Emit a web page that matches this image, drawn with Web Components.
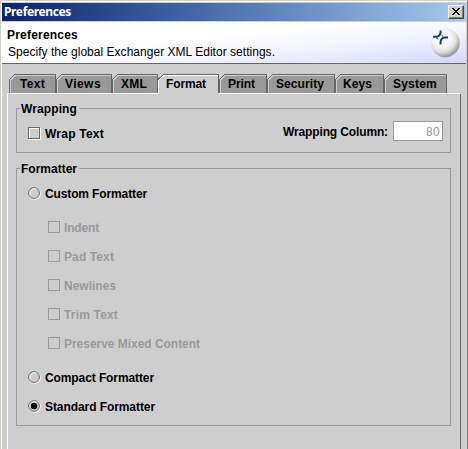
<!DOCTYPE html>
<html lang="en">
<head>
<meta charset="utf-8">
<title>Preferences</title>
<style>
html,body{margin:0;width:468px;height:449px;overflow:hidden;background:#cecece}
body{font:bold 12px/14px "Liberation Sans",Arial,sans-serif;color:#000}
</style>
</head>
<body>
<pref-window></pref-window>
<script>
const define=(name,html,setup)=>customElements.define(name,class extends HTMLElement{
  connectedCallback(){
    if(this.shadowRoot)return;
    const t=document.createElement('template');
    t.innerHTML=html;
    this.attachShadow({mode:'open'}).append(t.content.cloneNode(true));
    if(setup)setup(this,this.shadowRoot);
  }
});

/* One line of text, tracked to fill the width given by "w". */
define('ui-text',`<style>
:host{display:block;flex:none;white-space:nowrap;height:14px}
span{display:inline-block;vertical-align:top;line-height:var(--text-line,14px)}
</style><span><slot></slot></span>`,(el,root)=>{
  const w=+el.getAttribute('w'),s=root.querySelector('span');
  el.style.width=w+'px';
  s.style.letterSpacing=((w-s.getBoundingClientRect().width)/el.textContent.length)+'px';
});

define('title-bar',`<style>
:host{display:flex;height:18px;box-sizing:border-box;padding:0 2px;align-items:center;justify-content:space-between;color:#fff;
 background:linear-gradient(90deg,#0a246a 0%,#2c4c90 25%,#4f76b4 50%,#7c9fd2 75%,#a6caf0 100%);
 font:bold 12px/14px "Noto Sans","Open Sans",sans-serif}
button{all:unset;box-sizing:border-box;width:16px;height:14px;background:#d4d0c8;border:1px solid;border-color:#fff #404040 #404040 #fff;box-shadow:inset -1px -1px #808080;display:grid;place-items:center}
svg{display:block;margin:-1px 1px 0 0}
</style><slot></slot><button aria-label="Close"><svg width="8" height="7" shape-rendering="crispEdges"><path d="M0 0h2v1h1v1h2v-1h1v-1h2v1h-1v1h-1v1h-1v1h1v1h1v1h1v1h-2v-1h-1v-1h-2v1h-1v1h-2v-1h1v-1h1v-1h1v-1h-1v-1h-1v-1h-1z"/></svg></button>`);

define('header-banner',`<style>
:host{display:flex;justify-content:space-between;height:43px;box-sizing:border-box;padding:6px 6px 0 5px;border-top:1px solid #d4d0c8;border-bottom:1px solid #666;
 background:linear-gradient(174deg,#fff 42%,#f5f6ff 62%,#d1d8ff 100%)}
.copy{display:grid;grid-template-rows:16px 14px;align-content:start}
.sub{font-weight:400;padding-left:1px;--text-line:16px}
svg{display:block;margin-top:-1px}
</style><div class="copy"><slot name="title"></slot><div class="sub"><slot name="sub"></slot></div></div>
<svg width="30" height="32" viewBox="0 0 30 32"><defs><radialGradient id="g" cx=".4" cy=".35" r=".64"><stop offset="0" stop-color="#fff"/><stop offset=".48" stop-color="#f5f5f5"/><stop offset=".75" stop-color="#ddd"/><stop offset="1" stop-color="#999"/></radialGradient></defs>
<circle cx="15.2" cy="15.7" r="14.5" fill="url(#g)"/>
<path d="M3.2 9.8H6Q10.6 9.6 10.8 3.5M10.5 17.6V15.5Q10.7 10.8 15 10.5H18" fill="none" stroke="#123e70" stroke-width="2"/><path d="M6 10.5L8.3 12.2M11.5 8L13.5 9.8" fill="none" stroke="#123e70" stroke-width="1"/></svg>`);

define('ui-tab',`<style>
:host{display:block;position:relative;flex:none;height:19px}
svg{display:block;position:absolute;left:0;top:0;overflow:visible}
.c{position:relative;padding-top:3px}
</style><svg height="20" shape-rendering="crispEdges"></svg><div class="c"><slot></slot></div>`,(el,r)=>{
  const w=+el.getAttribute('w'),on=el.hasAttribute('selected'),s=r.querySelector('svg');
  el.style.width=w+'px';
  r.querySelector('.c').style.paddingLeft=el.getAttribute('pad')+'px';
  s.setAttribute('width',w);
  s.innerHTML=on?`<path d="M0 20V6L6 0H${w}V20z" fill="#cecece"/><path d="M.5 20V6L6 1.5H${w-1}" stroke="#fff" fill="none"/><path d="M0 5.5L5.5.5H${w-.5}V19" stroke="#666" fill="none"/>`
   :`<path d="M0 19V6L6 0H${w}V19z" fill="#999"/><path d="M1.5 19V6L6 1.5H${w-1}" stroke="#cecece" fill="none"/><path d="M.5 19V5.5L5.5.5H${w-.5}V19" stroke="#666" fill="none"/>`;
});

define('tab-panel',`<style>
:host{display:block;padding:10px 5px 0 5px}
.tabs{display:flex;padding-left:2px}
.body{box-sizing:border-box;width:454px;height:360px;border:1px solid #fff;border-right-color:#666;border-bottom:0;padding:7px 9px 0 8px;display:flex;flex-direction:column;gap:8px}
</style><div class="tabs"><slot name="tab"></slot></div><div class="body"><slot></slot></div>`);

define('group-box',`<style>
:host{display:block;flex:none;box-sizing:border-box;--text-line:16px}
.f{display:grid;height:100%;grid-template-rows:14px 1fr}
.top{display:flex;align-items:center;gap:1px}
.top i{height:1px;background:#999;width:4px}.top i:last-child{flex:1;margin-left:1px}
.in{border:1px solid #999;border-top:0;margin-top:-7px;padding-top:7px;box-sizing:border-box}
</style><div class="f"><div class="top"><i></i><slot name="legend"></slot><i></i></div><div class="in"><slot></slot></div></div>`);

define('check-box',`<style>
:host{display:flex;align-items:center;gap:4px;height:14px}
:host([disabled]){color:#999}
svg{display:block;flex:none}
</style><svg width="13" height="13" shape-rendering="crispEdges"></svg><slot></slot>`,(el,r)=>{
  const off=el.hasAttribute('disabled'),s=r.querySelector('svg');
  if(off)s.setAttribute('width',12);
  s.innerHTML=off?'<path d="M.5.5h11v11h-11z" fill="none" stroke="#999"/>':
  '<path d="M1.5 1.5h11v11h-11z" fill="none" stroke="#fff"/><path d="M.5.5h11v11h-11z" fill="none" stroke="#666"/><path d="M1.5 11V1.5H11" fill="none" stroke="#fff"/>';
});

define('radio-button',`<style>
:host{display:flex;align-items:center;gap:4px;height:14px}
svg{display:block;flex:none}
circle.dot{display:none}:host([checked]) .dot{display:block}
</style><svg width="13" height="13"><circle cx="6.6" cy="6.6" r="5.6" fill="none" stroke="#fff" stroke-width="1.2"/><circle cx="6" cy="6" r="5.4" fill="#cecece" stroke="#666"/><path d="M2.2 8.2Q1 4.5 4 2.3Q6 1 8.3 2.2" fill="none" stroke="#fff" stroke-width=".9"/><circle class="dot" cx="6" cy="6" r="3.3"/></svg><slot></slot>`);

define('number-field',`<style>
:host{display:flex;justify-content:flex-end;align-items:center;box-sizing:border-box;width:50px;height:20px;background:#fff;border:1px solid #999;color:#999;font-weight:400;padding:0 2px 0 0}
</style><slot></slot>`);

define('pref-window',`<style>
:host{display:block;box-sizing:border-box;width:468px;height:449px;overflow:hidden;background:#cecece;border-left:1px solid #d4d0c8;border-top:1px solid #d4d0c8;border-right:1px solid #808080}
.frame{box-sizing:border-box;height:448px;border-left:1px solid #fff;border-top:1px solid #fff;border-right:1px solid #d4d0c8;padding-top:1px}
.wrap{display:flex;justify-content:space-between;padding:11px 7px 0 11px}
.num{display:flex;gap:5px;align-items:center;margin-top:-5px;height:20px}
.fmt{display:flex;flex-direction:column;gap:15px;padding:11px 0 0 11px}
.sub{display:flex;flex-direction:column;gap:15px;padding:5px 0 5px 20px}
</style><div class="frame">
<title-bar><ui-text w="67">Preferences</ui-text></title-bar>
<header-banner><ui-text slot="title" w="71">Preferences</ui-text><ui-text slot="sub" w="267">Specify the global Exchanger XML Editor settings.</ui-text></header-banner>
<tab-panel>
<ui-tab slot="tab" w="47" pad="11"><ui-text w="25">Text</ui-text></ui-tab><ui-tab slot="tab" w="56" pad="9"><ui-text w="36">Views</ui-text></ui-tab><ui-tab slot="tab" w="46" pad="9"><ui-text w="26">XML</ui-text></ui-tab><ui-tab slot="tab" w="61" pad="8" selected><ui-text w="40">Format</ui-text></ui-tab><ui-tab slot="tab" w="48" pad="9"><ui-text w="27">Print</ui-text></ui-tab><ui-tab slot="tab" w="68" pad="9"><ui-text w="48">Security</ui-text></ui-tab><ui-tab slot="tab" w="49" pad="8"><ui-text w="29">Keys</ui-text></ui-tab><ui-tab slot="tab" w="63" pad="9"><ui-text w="44">System</ui-text></ui-tab>
<group-box style="height:52px"><ui-text slot="legend" w="56">Wrapping</ui-text><div class="wrap"><check-box><ui-text w="59">Wrap Text</ui-text></check-box><div class="num"><ui-text w="105">Wrapping Column:</ui-text><number-field><ui-text w="14">80</ui-text></number-field></div></div></group-box>
<group-box style="height:265px"><ui-text slot="legend" w="56">Formatter</ui-text><div class="fmt">
<radio-button><ui-text w="102">Custom Formatter</ui-text></radio-button>
<div class="sub"><check-box disabled><ui-text w="35">Indent</ui-text></check-box><check-box disabled><ui-text w="50">Pad Text</ui-text></check-box><check-box disabled><ui-text w="52">Newlines</ui-text></check-box><check-box disabled><ui-text w="54">Trim Text</ui-text></check-box><check-box disabled><ui-text w="136">Preserve Mixed Content</ui-text></check-box></div>
<radio-button><ui-text w="109">Compact Formatter</ui-text></radio-button><radio-button checked><ui-text w="110">Standard Formatter</ui-text></radio-button>
</div></group-box>
</tab-panel></div>`);
</script>
</body>
</html>
